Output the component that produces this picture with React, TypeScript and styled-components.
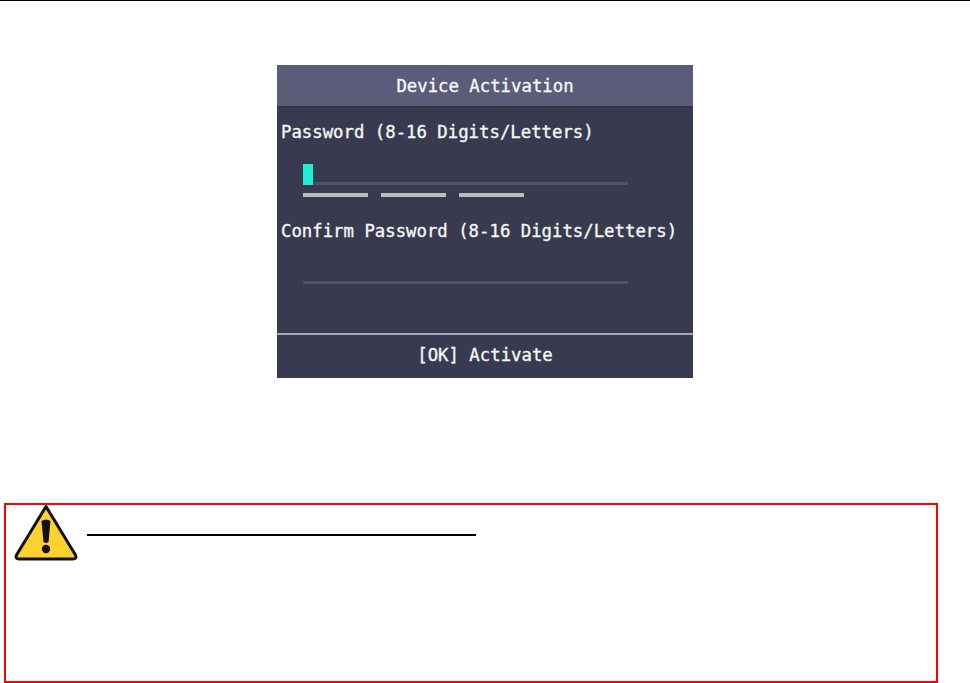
import React from "react";
import styled, { createGlobalStyle } from "styled-components";

const Global = createGlobalStyle`
  html, body { margin: 0; padding: 0; background: #fff; }
  body { width: 970px; height: 683px; overflow: hidden; }
`;

const Page = styled.div`
  display: flex;
  flex-direction: column;
  width: 970px;
  height: 683px;
  border-top: 1px solid #000;
  box-sizing: border-box;
`;

const Screen = styled.div`
  display: flex;
  flex-direction: column;
  align-self: center;
  width: 416px;
  height: 313px;
  margin-top: 64px;
  background: #383b4f;
  color: #f6f6f6;
  font-family: "DejaVu Sans Mono", "Liberation Mono", monospace;
  font-size: 17.32px;
  line-height: 20px;
  -webkit-text-stroke: 0.35px #f6f6f6;
`;

const Header = styled.div`
  display: flex;
  align-items: center;
  justify-content: center;
  height: 41px;
  background: #5a5c7a;
  border-bottom: 2px solid #35354a;
  box-sizing: content-box;
`;

const Body = styled.div`
  flex: 1;
  display: flex;
  flex-direction: column;
  padding: 14px 0 0 4px;
`;

const Label = styled.div`
  white-space: nowrap;
`;

const Field = styled.div<{ $top: number }>`
  position: relative;
  width: 325px;
  height: 3px;
  margin: ${(p) => p.$top}px 0 0 22px;
  background: #525266;
`;

const Cursor = styled.div`
  position: absolute;
  left: 0;
  bottom: 0;
  width: 10px;
  height: 21px;
  background: #1eedd9;
`;

const Strength = styled.div`
  display: flex;
  gap: 13px;
  margin: 8px 0 0 22px;
`;

const Segment = styled.div`
  width: 65px;
  height: 4px;
  background: #bcbcbc;
`;

const SecondLabel = styled(Label)`
  margin-top: 24px;
`;

const Footer = styled.div`
  display: flex;
  align-items: center;
  justify-content: center;
  height: 45px;
  padding-bottom: 3px;
  box-sizing: border-box;
  border-top: 2px solid #a8a8ae;
`;

const Warning = styled.div`
  display: flex;
  align-items: flex-start;
  gap: 9px;
  box-sizing: border-box;
  width: 934px;
  height: 180px;
  margin: 125px 0 0 4px;
  padding: 0 0 0 8px;
  border: 2px solid #f00;
`;

const WarningIcon = styled.svg`
  display: block;
  width: 64px;
  height: 57px;
  flex: none;
`;

const Rule = styled.div`
  width: 389px;
  height: 2px;
  margin-top: 29px;
  background: #000;
`;

export default function App() {
  return (
    <>
      <Global />
      <Page>
        <Screen>
          <Header>Device Activation</Header>
          <Body>
            <Label>Password (8-16 Digits/Letters)</Label>
            <Field $top={40}>
              <Cursor />
            </Field>
            <Strength>
              <Segment />
              <Segment />
              <Segment />
            </Strength>
            <SecondLabel>Confirm Password (8-16 Digits/Letters)</SecondLabel>
            <Field $top={40} />
          </Body>
          <Footer>[OK] Activate</Footer>
        </Screen>
        <Warning>
          <WarningIcon viewBox="0 0 64 57">
            <path
              d="M32 1.5 L61.5 50 Q63 54 59 54 L5 54 Q1 54 2.5 50 Z"
              fill="#fdd12f"
              stroke="#111"
              strokeWidth="3"
              strokeLinejoin="round"
            />
            <path d="M27.5 16 Q32 13 36.5 16 L34.5 37 Q32 39 29.5 37 Z" fill="#111" />
            <circle cx="32" cy="44" r="4.2" fill="#111" />
          </WarningIcon>
          <Rule />
        </Warning>
      </Page>
    </>
  );
}
